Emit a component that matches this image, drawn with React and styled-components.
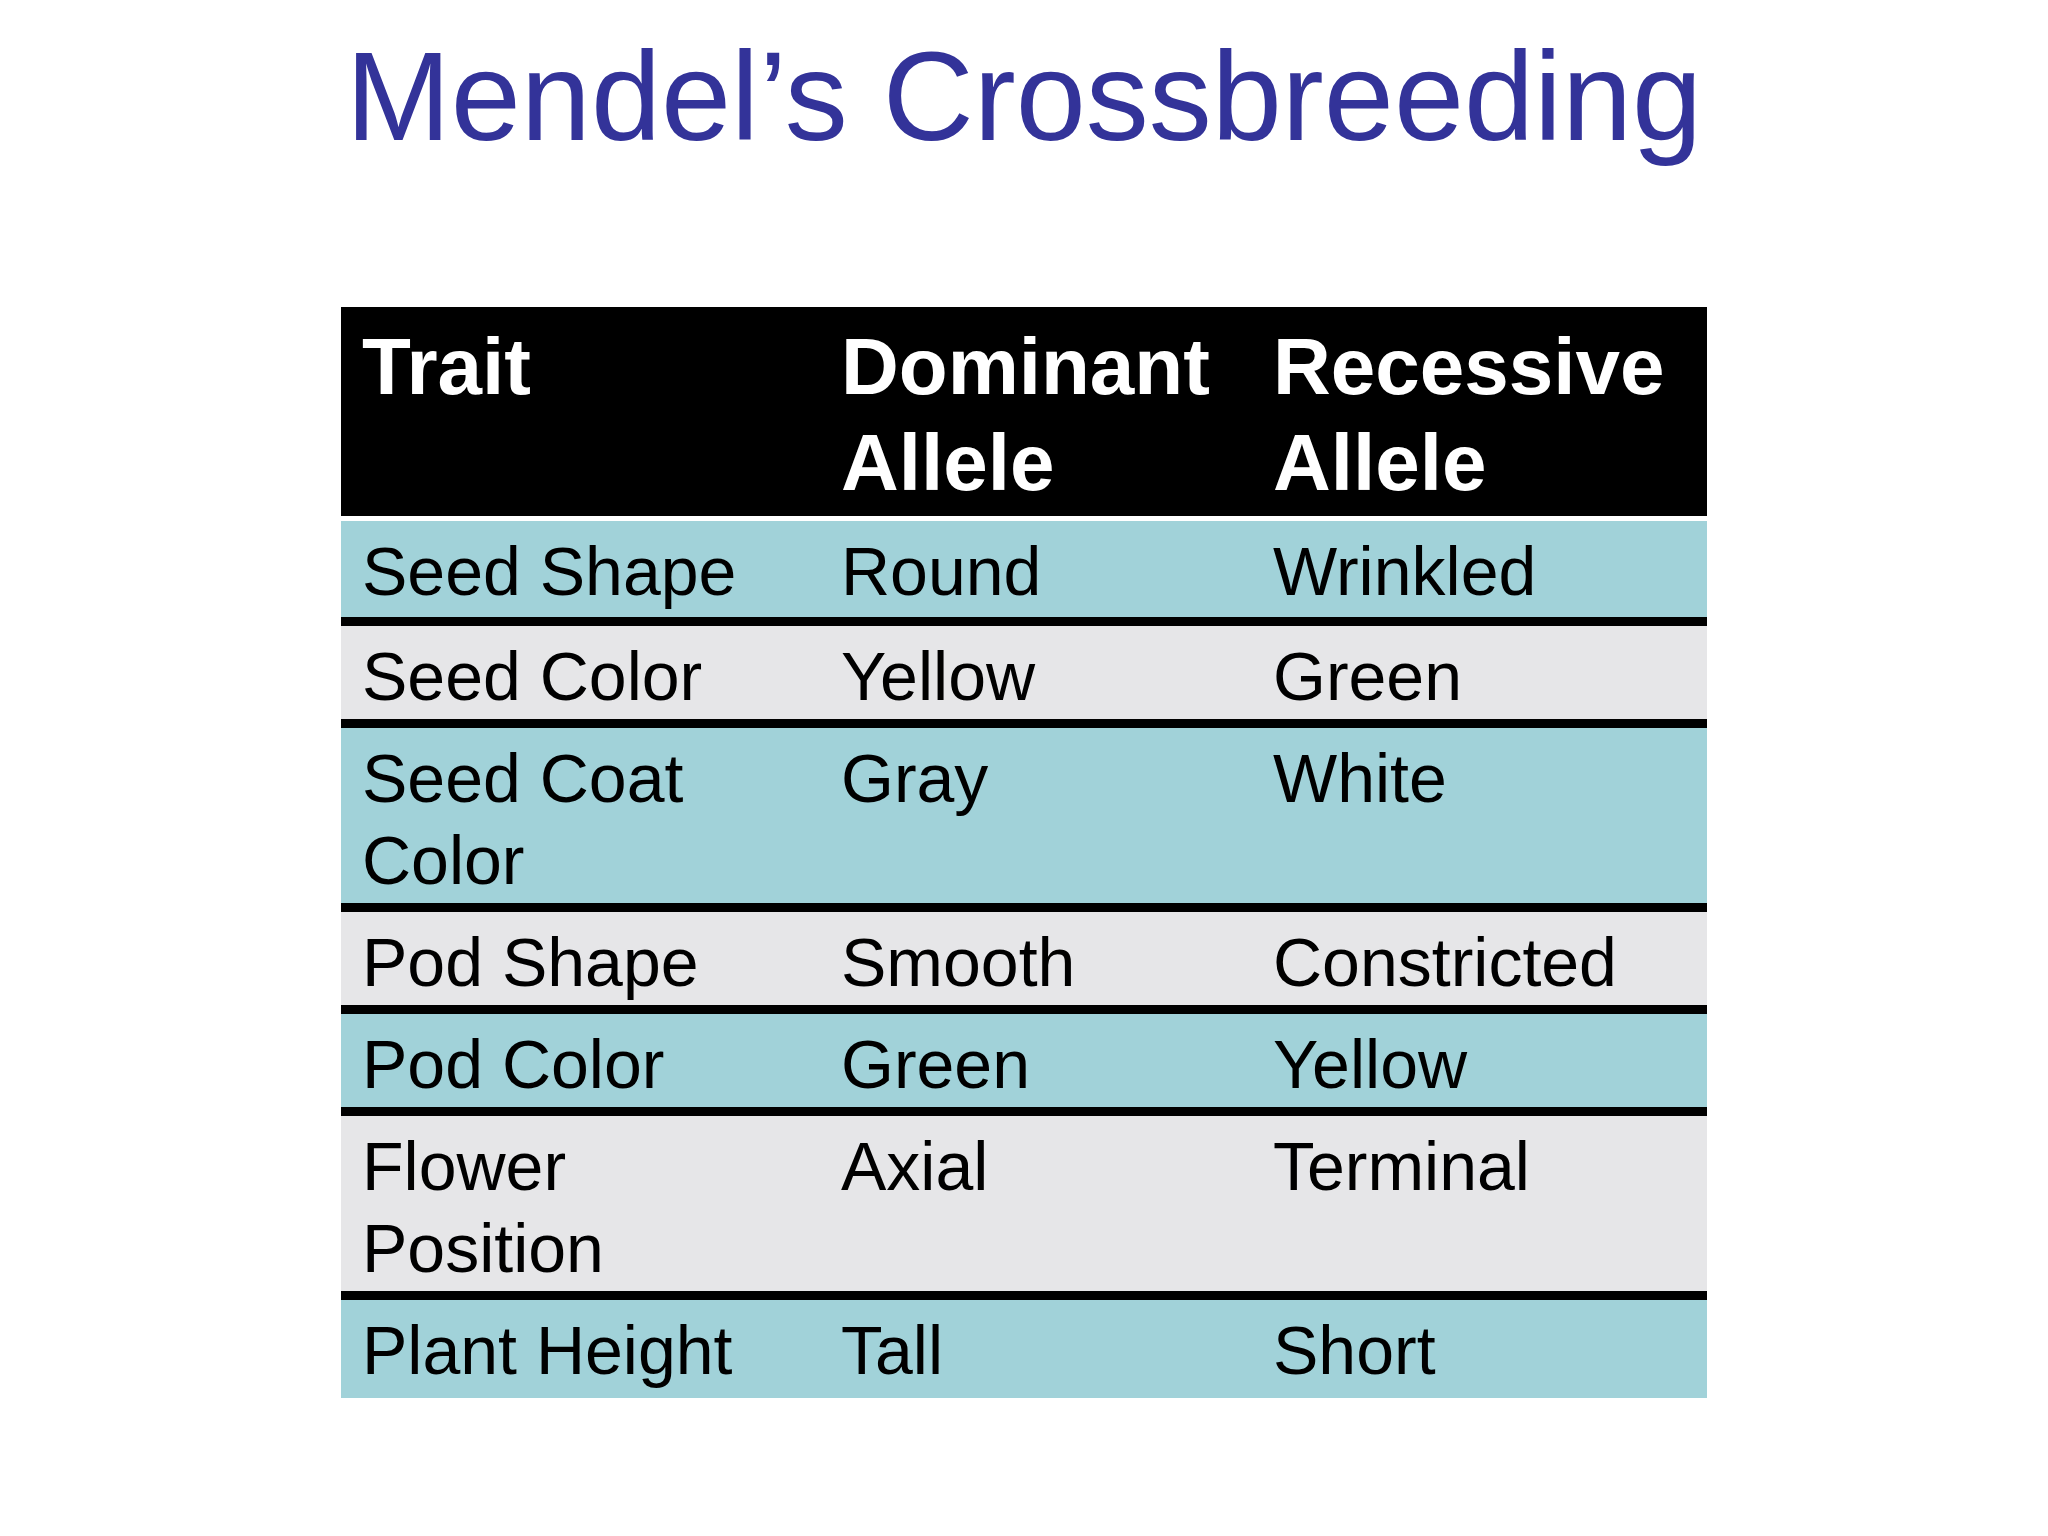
import React from "react";
import styled, { createGlobalStyle } from "styled-components";

const GlobalStyle = createGlobalStyle`
  html, body {
    margin: 0;
    padding: 0;
    background: #ffffff;
  }
  body {
    font-family: "Liberation Sans", Arial, sans-serif;
  }
`;

const Slide = styled.main`
  width: 2048px;
  min-height: 1536px;
  display: flex;
  flex-direction: column;
  align-items: center;
  background: #ffffff;
`;

const Title = styled.h1`
  margin: 22px 0 0;
  font-family: "Liberation Sans", Arial, sans-serif;
  font-weight: 400;
  font-size: 126px;
  line-height: 149px;
  color: #333399;
  letter-spacing: 0;
`;

const Table = styled.section`
  margin-top: 136px;
  width: 1366px;
  display: flex;
  flex-direction: column;
`;

const COLS = "479px 432px 455px";

const HeaderRow = styled.div`
  display: grid;
  grid-template-columns: ${COLS};
  background: #000000;
  padding: 12px 0 5px;
`;

const HeaderCell = styled.div`
  padding: 0 21px;
  font-family: "Liberation Sans", Arial, sans-serif;
  font-weight: 700;
  font-size: 80px;
  line-height: 96px;
  color: #ffffff;
`;

const BodyRow = styled.div`
  display: grid;
  grid-template-columns: ${COLS};
  background: ${(p) => (p.$tone === "teal" ? "#a1d2d9" : "#e6e6e8")};
  border-top: ${(p) => (p.$first ? "5px solid #ffffff" : "9px solid #000000")};
  padding: 9px 0 ${(p) => p.$padBottom}px;
`;

const Cell = styled.div`
  padding: 0 21px;
  font-family: "Liberation Sans", Arial, sans-serif;
  font-weight: 400;
  font-size: 68px;
  line-height: 82px;
  color: #000000;
`;

const rows = [
  ["Seed Shape", "Round", "Wrinkled"],
  ["Seed Color", "Yellow", "Green"],
  ["Seed Coat Color", "Gray", "White"],
  ["Pod Shape", "Smooth", "Constricted"],
  ["Pod Color", "Green", "Yellow"],
  ["Flower Position", "Axial", "Terminal"],
  ["Plant Height", "Tall", "Short"],
];

export default function App() {
  return (
    <>
      <GlobalStyle />
      <Slide>
        <Title>Mendel’s Crossbreeding</Title>
        <Table>
          <HeaderRow>
            <HeaderCell>Trait</HeaderCell>
            <HeaderCell>Dominant Allele</HeaderCell>
            <HeaderCell>Recessive Allele</HeaderCell>
          </HeaderRow>
          {rows.map((r, i) => (
            <BodyRow
              key={r[0]}
              $tone={i % 2 === 0 ? "teal" : "gray"}
              $first={i === 0}
              $padBottom={i === 0 ? 5 : i === rows.length - 1 ? 7 : 2}
            >
              {r.map((c) => (
                <Cell key={c}>{c}</Cell>
              ))}
            </BodyRow>
          ))}
        </Table>
      </Slide>
    </>
  );
}
